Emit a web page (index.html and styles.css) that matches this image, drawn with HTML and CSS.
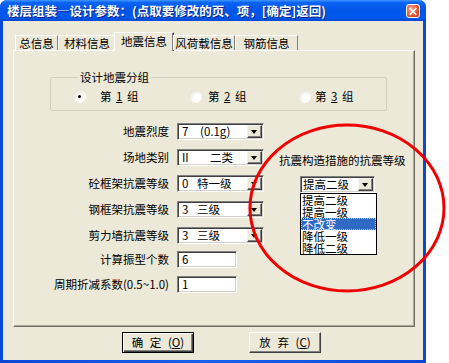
FILE: index.html
```html
<!DOCTYPE html>
<html lang="zh">
<head>
<meta charset="utf-8">
<link rel="stylesheet" href="styles.css">
</head>
<body>
<div class="window">
  <div class="titlebar">
    <span class="title">楼层组装—设计参数：(点取要修改的页、项，[确定]返回)</span>
    <span class="close"><svg width="13" height="13" viewBox="0 0 13 13"><path d="M3.5 3.5 L9.5 9.5 M9.5 3.5 L3.5 9.5" stroke="#fff" stroke-width="1.8" stroke-linecap="square"/></svg></span>
  </div>
  <div class="client">
    <div class="tabs">
      <div class="tab t1">总信息</div>
      <div class="tab t2">材料信息</div>
      <div class="tab t3 active">地震信息</div>
      <div class="tab t4">风荷载信息</div>
      <div class="tab t5">钢筋信息</div>
    </div>
    <div class="panel">
      <fieldset class="group">
        <legend>设计地震分组</legend>
        <div class="radios">
          <div class="radio-item r1"><span class="radio checked"></span><span class="rlabel">第 <u>1</u> 组</span></div>
          <div class="radio-item r2"><span class="radio"></span><span class="rlabel">第 <u>2</u> 组</span></div>
          <div class="radio-item r3"><span class="radio"></span><span class="rlabel">第 <u>3</u> 组</span></div>
        </div>
      </fieldset>
      <div class="form">
        <div class="fields">
          <div class="row"><label>地震烈度</label><div class="combo"><span class="val"><span class="num n18">7</span>(0.1g)</span><span class="btn"><i></i></span></div></div>
          <div class="row"><label>场地类别</label><div class="combo"><span class="val"><span class="num n28">II</span>二类</span><span class="btn"><i></i></span></div></div>
          <div class="row"><label>砼框架抗震等级</label><div class="combo"><span class="val"><span class="num n15">0</span>特一级</span><span class="btn"><i></i></span></div></div>
          <div class="row"><label>钢框架抗震等级</label><div class="combo"><span class="val"><span class="num n15">3</span>三级</span><span class="btn"><i></i></span></div></div>
          <div class="row"><label>剪力墙抗震等级</label><div class="combo"><span class="val"><span class="num n15">3</span>三级</span><span class="btn"><i></i></span></div></div>
          <div class="row row-in1"><label>计算振型个数</label><div class="input">6</div></div>
          <div class="row row-in2"><label>周期折减系数(0.5~1.0)</label><div class="input">1</div></div>
        </div>
        <div class="side">
          <div class="side-title">抗震构造措施的抗震等级</div>
          <div class="combo small"><span class="val">提高二级</span><span class="btn"><i></i></span>
            <ul class="list">
              <li>提高二级</li>
              <li>提高一级</li>
              <li class="sel">不改变</li>
              <li>降低一级</li>
              <li>降低二级</li>
            </ul>
          </div>
        </div>
      </div>
    </div>
    <div class="buttons">
      <div class="button default">确 定 (<u>O</u>)</div>
      <div class="button">放 弃 (<u>C</u>)</div>
    </div>
  </div>
  <svg class="ellipse" width="202" height="172" viewBox="0 0 202 172"><ellipse cx="101" cy="86" rx="97" ry="83" fill="none" stroke="#f00000" stroke-width="3"/></svg>
</div>
</body>
</html>
```

FILE: styles.css
```css
* { box-sizing: border-box; }
body {
  margin: 0;
  background: #fff;
  font-family: "Noto Sans CJK SC", "Noto Sans", sans-serif;
  font-size: 11.5px;
  color: #000;
}
.window {
  position: relative;
  width: 426px;
  height: 363px;
  display: flex;
  flex-direction: column;
  background: linear-gradient(to right, #0a48d8, #1a5ff0 50%, #0a48d8);
  border-radius: 7px 7px 0 0;
}
.titlebar {
  position: relative;
  height: 21px;
  flex: none;
  display: flex;
  align-items: center;
  padding-left: 7px;
  border-radius: 7px 7px 0 0;
  background: linear-gradient(to bottom, #3d95ff 0%, #0b64f4 12%, #0256e8 45%, #0058ee 85%, #0446cf 100%);
}
.title {
  color: #fff;
  font-weight: bold;
  font-size: 12.5px;
  line-height: 14px;
  text-shadow: 1px 1px 0 #0a1f80;
  white-space: nowrap;
}
.close {
  position: absolute;
  left: 406px;
  top: 4px;
  width: 14px;
  height: 14px;
  border: 1px solid #fff;
  border-radius: 3px;
  background: radial-gradient(circle at 35% 30%, #f7a48b, #e2512a 60%, #c13b1a);
  display: flex;
  align-items: center;
  justify-content: center;
}
.close svg { display: block; }
.client {
  flex: 1;
  margin: 0 3px 3px 3px;
  background: #ece9d8;
  display: flex;
  flex-direction: column;
  padding: 11px 8px 0 10px;
}
.tabs {
  display: flex;
  align-items: flex-end;
  height: 18px;
  padding-left: 2px;
  position: relative;
  z-index: 1;
}
.tab {
  height: 15px;
  line-height: 14px;
  text-align: center;
  border-top: 1px solid #fff;
  border-left: 1px solid #fff;
  border-right: 1px solid #808080;
  white-space: nowrap;
}
.t1 { width: 43px; }
.t2 { width: 58px; }
.t3 { width: 60px; }
.t4 { width: 62px; }
.t5 { width: 63px; }
.tab.active {
  height: 19px;
  margin-bottom: -1px;
  margin-left: -2px;
  margin-right: -1px;
  background: #ece9d8;
  line-height: 16px;
  border-right: 1px solid #404040;
  box-shadow: inset -1px 0 0 #808080;
}
.panel {
  height: 277px;
  border-top: 1px solid #fff;
  border-left: 1px solid #fff;
  border-right: 1px solid #716f64;
  border-bottom: 1px solid #716f64;
  box-shadow: inset -1px -1px 0 #aca899;
}
.group {
  margin: 20px 0 0 36px;
  width: 337px;
  padding: 6px 0 7px 22px;
  border: 1px solid #d0d0bf;
  border-radius: 2px;
}
.group legend {
  padding: 0 2px;
  margin-left: 5px;
  line-height: 12px;
}
.radios {
  display: grid;
  grid-template-columns: 116px 109px auto;
  height: 14px;
  align-items: center;
}
.radio-item { display: flex; align-items: center; }
.radio {
  width: 13px;
  height: 13px;
  border-radius: 50%;
  background: radial-gradient(circle at 65% 65%, #fff 30%, #e8e6dc 70%, #cfcbbd);
  position: relative;
  flex: none;
}
.radio.checked::after {
  content: "";
  position: absolute;
  left: 5px;
  top: 5px;
  width: 3px;
  height: 3px;
  border-radius: 50%;
  background: #000;
}
.rlabel { margin-left: 6px; white-space: nowrap; line-height: 14px; }
.r1 .rlabel { margin-left: 14px; }
.r3 .rlabel { margin-left: 4px; }
.rlabel u { margin: 0 2px; }
.form {
  display: flex;
  margin-top: 12px;
}
.fields {
  display: flex;
  flex-direction: column;
}
.row {
  display: flex;
  height: 17px;
  margin-bottom: 9px;
}
.row.row-in1 { margin-top: -2px; margin-bottom: 8px; }
.row label {
  width: 155px;
  margin-right: 8px;
  text-align: right;
  line-height: 17px;
  white-space: nowrap;
}
.combo {
  position: relative;
  width: 87px;
  height: 17px;
  background: #fff;
  border-top: 1px solid #808080;
  border-left: 1px solid #808080;
  border-right: 1px solid #fff;
  border-bottom: 1px solid #fff;
  box-shadow: inset 1px 1px 0 #404040, inset -1px -1px 0 #d4d0c8;
  display: flex;
  padding: 1px;
}
.val {
  flex: 1;
  display: flex;
  padding-left: 3px;
  line-height: 13px;
  white-space: nowrap;
}
.num { flex: none; }
.n15 { width: 15px; }
.n18 { width: 18px; }
.n28 { width: 28px; }
.btn {
  width: 15px;
  height: 13px;
  flex: none;
  background: #ece9d8;
  border-top: 1px solid #f4f3ee;
  border-left: 1px solid #f4f3ee;
  border-right: 1px solid #404040;
  border-bottom: 1px solid #404040;
  box-shadow: inset -1px -1px 0 #808080;
  display: flex;
  align-items: center;
  justify-content: center;
}
.btn i {
  width: 0;
  height: 0;
  border-left: 3.5px solid transparent;
  border-right: 3.5px solid transparent;
  border-top: 4px solid #000;
  margin-left: -1px;
}
.input {
  width: 60px;
  height: 17px;
  background: #fff;
  border-top: 1px solid #808080;
  border-left: 1px solid #808080;
  border-right: 1px solid #fff;
  border-bottom: 1px solid #fff;
  box-shadow: inset 1px 1px 0 #404040, inset -1px -1px 0 #d4d0c8;
  padding-left: 4px;
  line-height: 15px;
}
.side {
  margin-left: 15px;
  padding-top: 29px;
}
.side-title { line-height: 17px; white-space: nowrap; }
.combo.small {
  width: 75px;
  margin: 7px 0 0 21px;
}
.combo.small .val { padding-left: 1px; }
.list {
  position: absolute;
  left: -1px;
  top: 16px;
  width: 77px;
  margin: 0;
  padding: 0;
  list-style: none;
  background: #fff;
  border: 1px solid #000;
  z-index: 2;
}
.list li {
  height: 12px;
  line-height: 12px;
  padding-left: 1px;
  white-space: nowrap;
}
.list li.sel {
  background: #316ac5;
  color: #fff;
  outline: 1px dotted #f0c060;
  outline-offset: -1px;
}
.buttons {
  display: flex;
  gap: 55px;
  padding-left: 109px;
  margin-top: 5px;
}
.button {
  width: 72px;
  height: 21px;
  line-height: 18px;
  text-align: center;
  word-spacing: 4px;
  background: #ece9d8;
  border-top: 1px solid #fff;
  border-left: 1px solid #fff;
  border-right: 1px solid #404040;
  border-bottom: 1px solid #404040;
  box-shadow: inset -1px -1px 0 #808080;
}
.button.default {
  border: 1px solid #000;
  box-shadow: inset 1px 1px 0 #fff, inset -1px -1px 0 #404040, inset -2px -2px 0 #808080;
}
.ellipse {
  position: absolute;
  left: 246px;
  top: 122px;
  z-index: 5;
  overflow: visible;
}
```
